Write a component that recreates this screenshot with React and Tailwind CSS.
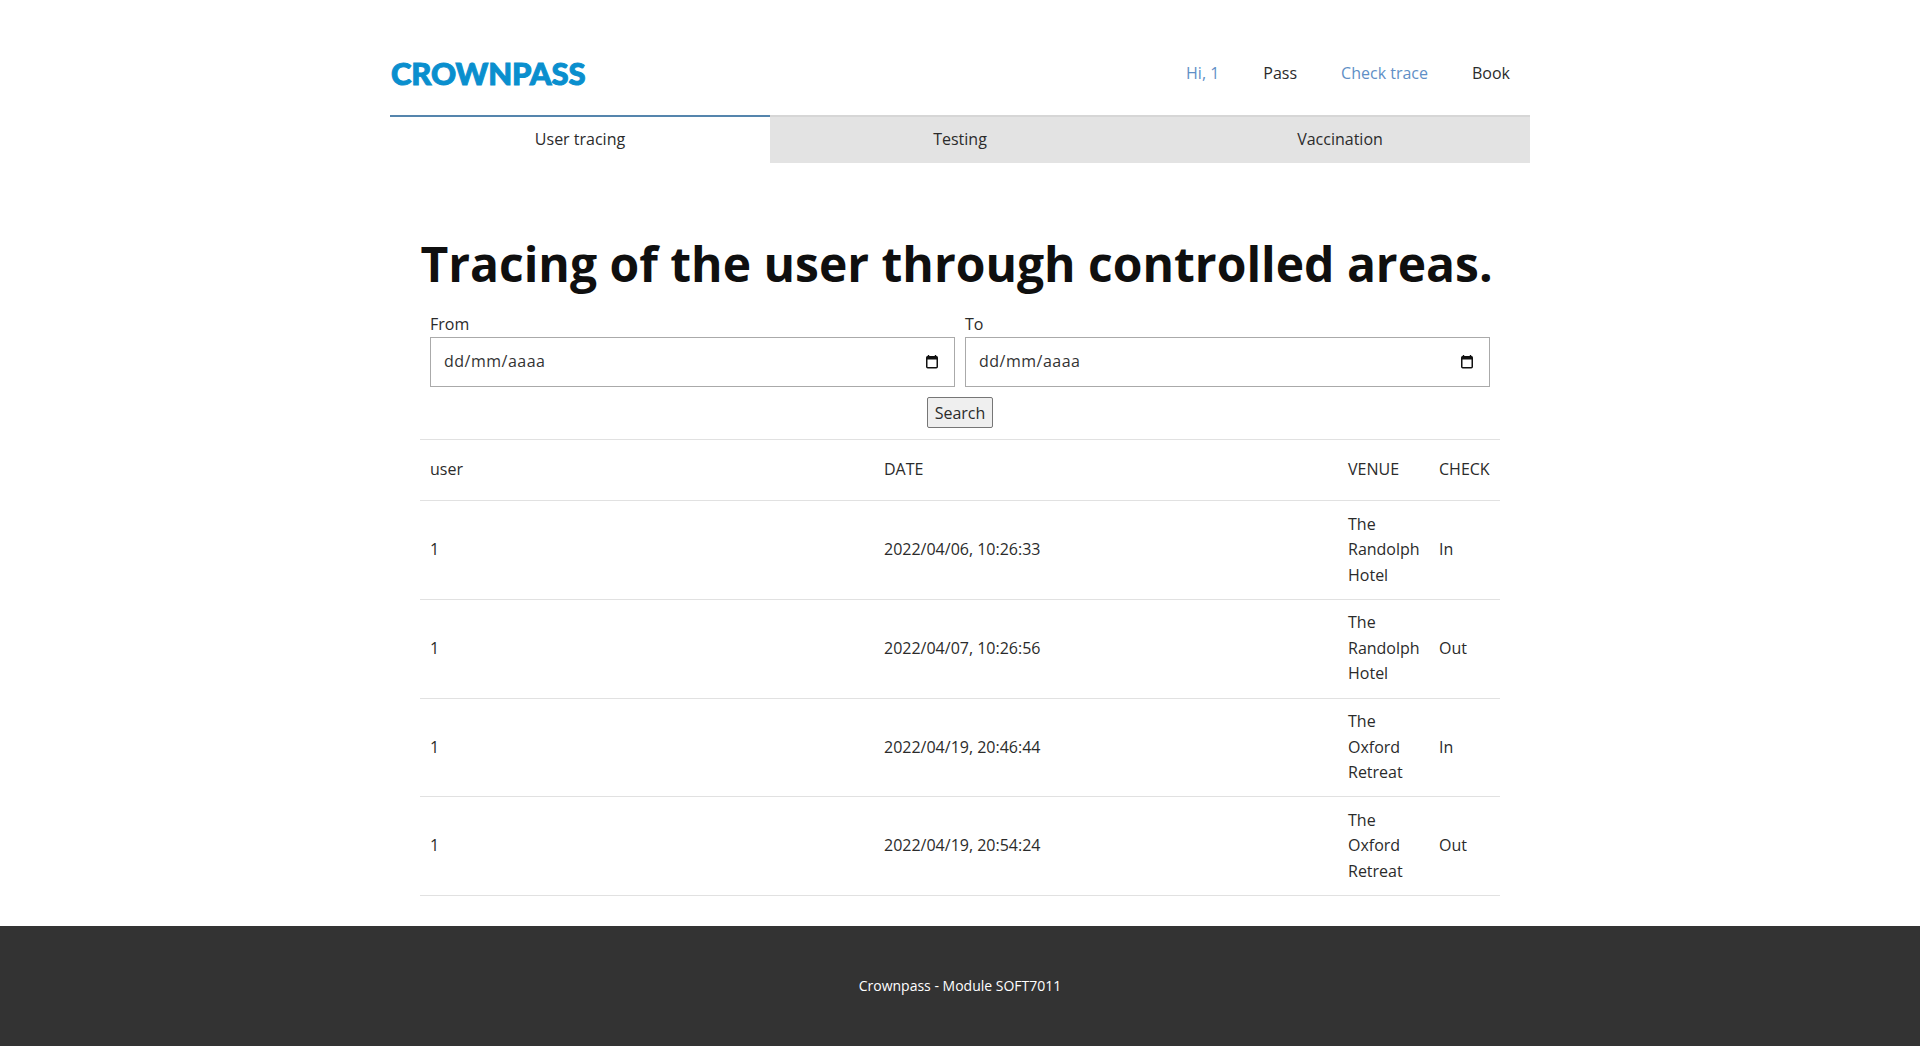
const rows = [
  ["1", "2022/04/06, 10:26:33", "The Randolph Hotel", "In"],
  ["1", "2022/04/07, 10:26:56", "The Randolph Hotel", "Out"],
  ["1", "2022/04/19, 20:46:44", "The Oxford Retreat", "In"],
  ["1", "2022/04/19, 20:54:24", "The Oxford Retreat", "Out"],
];

function Cal() {
  return (
    <svg width="14" height="16" viewBox="0 0 14 16" className="shrink-0">
      <path d="M3.5 1v2M10.5 1v2" stroke="#111" strokeWidth="1.4" />
      <rect x="1.75" y="2.75" width="10.5" height="11" rx="1" fill="none" stroke="#111" strokeWidth="1.5" />
      <rect x="1.75" y="2.5" width="10.5" height="3" fill="#111" />
    </svg>
  );
}

function DateField({ label }) {
  return (
    <div className="flex-1">
      <div className="h-[25px] leading-[25px]">{label}</div>
      <div className="flex h-[50px] items-center justify-between border border-[#aaa] pl-[13px] pr-[15px] text-[#333]">
        <span className="tracking-[0.5px]">dd/mm/aaaa</span>
        <Cal />
      </div>
    </div>
  );
}

export default function App() {
  return (
    <div className="flex min-h-screen flex-col bg-white text-[16px] leading-[25.6px] text-[#2b2b2b] font-['Open_Sans','Noto_Sans',sans-serif]">
      <div className="mx-auto w-[1140px]">
        <header className="flex h-[115px] items-end justify-between pb-[28px]">
          <div className="pb-[1px] pl-[1px] text-[31px] leading-[26px] font-black tracking-[-0.1px] text-[#0a8fce] [-webkit-text-stroke:1px_#0a8fce] font-['Lato','Open_Sans',sans-serif]">CROWNPASS</div>
          <nav className="flex gap-[44px] pr-[20px]">
            <span className="text-[#5f8fc6]">Hi, 1</span>
            <span>Pass</span>
            <span className="text-[#5f8fc6]">Check trace</span>
            <span>Book</span>
          </nav>
        </header>
        <div className="flex">
          <div className="flex h-[48px] w-[380px] items-center justify-center border-t-2 border-[#5585ad]">User tracing</div>
          <div className="flex h-[48px] w-[380px] items-center justify-center border-t-2 border-[#d6d6d6] bg-[#e3e3e3]">Testing</div>
          <div className="flex h-[48px] w-[380px] items-center justify-center border-t-2 border-[#d6d6d6] bg-[#e3e3e3]">Vaccination</div>
        </div>
        <main className="mx-auto w-[1080px] pt-[72px]">
          <h1 className="pr-[7px] text-center text-[48px] leading-[58px] font-bold text-[#0f0f0f] whitespace-nowrap">Tracing of the user through controlled areas.</h1>
          <div className="flex gap-[10px] px-[10px] pt-[19px]">
            <DateField label="From" />
            <DateField label="To" />
          </div>
          <div className="flex justify-center pt-[10px] pb-[11px]">
            <button className="h-[31px] rounded-[2px] border border-[#767676] bg-[#efefef] px-[7px] leading-[24px] text-[#2b2b2b]">Search</button>
          </div>
          <table className="w-full border-collapse table-fixed">
            <colgroup>
              <col className="w-[454px]" />
              <col className="w-[464px]" />
              <col className="w-[91px]" />
              <col className="w-[71px]" />
            </colgroup>
            <thead>
              <tr className="border-y border-[#e1e1e1]">
                <th className="h-[61px] px-[10px] text-left font-normal">user</th>
                <th className="px-[10px] text-left font-normal">DATE</th>
                <th className="px-[10px] text-left font-normal">VENUE</th>
                <th className="px-[10px] text-left font-normal">CHECK</th>
              </tr>
            </thead>
            <tbody>
              {rows.map((r, i) => (
                <tr key={i} className="border-b border-[#e1e1e1]">
                  <td className="px-[10px] py-[10.5px]">{r[0]}</td>
                  <td className="px-[10px] py-[10.5px]">{r[1]}</td>
                  <td className="px-[10px] py-[10.5px]">{r[2]}</td>
                  <td className="px-[10px] py-[10.5px]">{r[3]}</td>
                </tr>
              ))}
            </tbody>
          </table>
        </main>
      </div>
      <footer className="mt-[30px] flex grow items-center justify-center bg-[#333] pb-[1px] text-[14px] text-white">Crownpass - Module SOFT7011</footer>
    </div>
  );
}
